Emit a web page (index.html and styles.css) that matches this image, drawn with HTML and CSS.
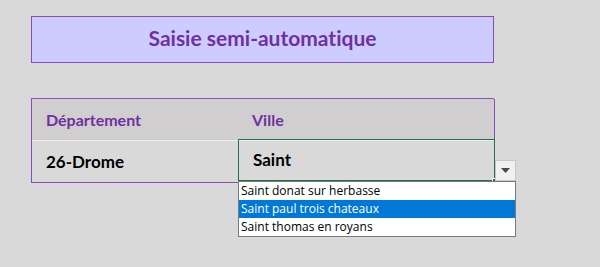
FILE: index.html
```html
<!DOCTYPE html>
<html lang="fr">
<head>
  <meta charset="UTF-8">
  <title>Saisie semi-automatique</title>
  <link rel="stylesheet" href="styles.css">
</head>
<body>
  <div class="sheet">
    <div class="title-box">Saisie semi-automatique</div>

    <div class="grid-table">
      <div class="cell head">Département</div>
      <div class="cell head">Ville</div>
      <div class="cell value">26-Drome</div>
      <div class="cell value active">
        Saint
        <span class="fill-handle"></span>
        <button class="drop-btn">
          <svg width="9" height="5" viewBox="0 0 9 5"><path d="M0 0h9L4.5 5z" fill="#4a4a4a"/></svg>
        </button>
        <ul class="suggest-list">
          <li>Saint donat sur herbasse</li>
          <li class="selected">Saint paul trois chateaux</li>
          <li>Saint thomas en royans</li>
        </ul>
      </div>
    </div>
  </div>
</body>
</html>
```

FILE: styles.css
```css
:root {
  --purple: #7030a0;
  --purple-border: #8a4cc2;
  --page-bg: #d9d9d9;
  --head-bg: #d0cece;
  --excel-green: #217346;
  --select-blue: #0078d7;
}

* {
  margin: 0;
  padding: 0;
  box-sizing: border-box;
}

body {
  background-color: var(--page-bg);
  font-family: Lato, 'Open Sans', sans-serif;
  font-variant-ligatures: none;
  width: 600px;
  height: 267px;
  overflow: hidden;
}

.sheet {
  padding: 16px 0 0 31px;
  width: 494px;
}

.title-box {
  height: 47px;
  background-color: #ccccff;
  border: 1px solid var(--purple-border);
  color: var(--purple);
  font-weight: 700;
  font-size: 21px;
  display: flex;
  align-items: center;
  justify-content: center;
  padding-bottom: 4px;
}

.grid-table {
  margin-top: 35px;
  display: grid;
  grid-template-columns: 206px 257px;
  grid-template-rows: 42px 41px;
  border: 1px solid var(--purple-border);
  border-right: none;
}

.cell {
  display: flex;
  align-items: center;
  padding-left: 14px;
  font-weight: 700;
}

.cell.head {
  background-color: var(--head-bg);
  color: var(--purple);
  font-size: 16px;
  border-bottom: 1px solid #ececec;
  padding-bottom: 1px;
}

.cell.head:nth-child(2) {
  border-right: 1px solid var(--purple-border);
}

.cell.value {
  color: #000;
  font-size: 17px;
  padding-bottom: 1px;
}

.cell.active {
  position: relative;
  border: 1px solid var(--excel-green);
  margin-top: -2px;
  height: 42px;
  padding-left: 14px;
}

.fill-handle {
  position: absolute;
  right: -3px;
  bottom: -3px;
  width: 5px;
  height: 5px;
  background-color: var(--excel-green);
  border: 1px solid #fff;
}

.drop-btn {
  position: absolute;
  left: 256px;
  top: 20px;
  width: 21px;
  height: 21px;
  border: 1px solid #c6c6c6;
  background-color: #f0f0f0;
  display: flex;
  align-items: center;
  justify-content: center;
}

.suggest-list {
  position: absolute;
  left: -1px;
  top: 41px;
  width: 278px;
  list-style: none;
  background-color: #fff;
  border: 1px solid #7a7a7a;
  font-family: 'Open Sans', sans-serif;
  font-weight: 400;
  font-size: 12px;
  color: #000;
  z-index: 2;
}

.suggest-list li {
  height: 18px;
  line-height: 18px;
  padding-left: 2px;
}

.suggest-list li.selected {
  background-color: var(--select-blue);
  color: #fff;
}
```
